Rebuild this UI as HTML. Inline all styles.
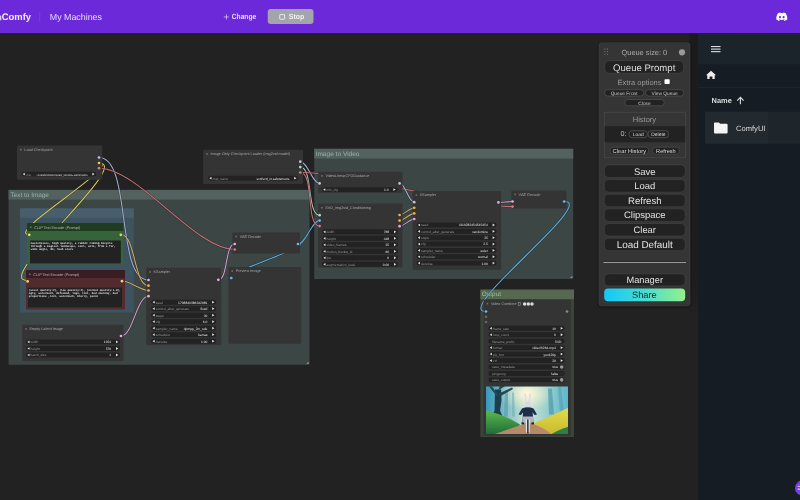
<!DOCTYPE html><html><head><meta charset="utf-8"><style>html,body{margin:0;padding:0;width:800px;height:500px;overflow:hidden;background:#222}svg{display:block;will-change:transform}text{font-family:"Liberation Sans",sans-serif;text-rendering:geometricPrecision}</style></head><body><svg width="800" height="500" viewBox="0 0 800 500"><rect x="0.00" y="0.00" width="800.00" height="500.00" fill="#222" />
<rect x="8.60" y="189.90" width="300.90" height="174.90" fill="#3c4644" />
<rect x="8.60" y="189.90" width="300.90" height="9.70" fill="#54625f" />
<text x="10.60" y="197.10" font-size="6.38" fill="#98b2aa" >Text to Image</text>
<path d="M308.6 361.5 L308.6 363.9 L306.2 363.9 Z" fill="#8a9490"/>
<rect x="314.20" y="148.80" width="259.00" height="130.20" fill="#3c4644" />
<rect x="314.20" y="148.80" width="259.00" height="9.80" fill="#54625f" />
<text x="315.60" y="156.30" font-size="6.56" fill="#98b2aa" >Image to Video</text>
<path d="M572.3 275.7 L572.3 278.1 L569.9 278.1 Z" fill="#8a9490"/>
<rect x="480.40" y="289.60" width="93.60" height="147.40" fill="#3c4439" />
<rect x="480.40" y="289.60" width="93.60" height="9.60" fill="#566850" />
<text x="481.80" y="296.20" font-size="6.40" fill="#98c090" >Output</text>
<rect x="20.00" y="208.40" width="113.80" height="104.20" fill="#3d5360" />
<rect x="20.00" y="208.40" width="113.80" height="9.40" fill="#475f6d" />
<path d="M99 157.5 C132.03 157.5 115.47 280 148.5 280" stroke="#000" stroke-opacity="0.3" stroke-width="2.1" fill="none"/><path d="M99 157.5 C132.03 157.5 115.47 280 148.5 280" stroke="#a8abcb" stroke-width="1.1" fill="none"/><path d="M99 163 C124.02 163 3.98 234.5 29 234.5" stroke="#000" stroke-opacity="0.3" stroke-width="2.1" fill="none"/><path d="M99 163 C124.02 163 3.98 234.5 29 234.5" stroke="#d4c458" stroke-width="1.1" fill="none"/><path d="M99 163 C133.45 163 -7.45 280.5 27 280.5" stroke="#000" stroke-opacity="0.3" stroke-width="2.1" fill="none"/><path d="M99 163 C133.45 163 -7.45 280.5 27 280.5" stroke="#d4c458" stroke-width="1.1" fill="none"/><path d="M99 168.2 C138.55 168.2 195.15 249.5 234.7 249.5" stroke="#000" stroke-opacity="0.3" stroke-width="2.1" fill="none"/><path d="M99 168.2 C138.55 168.2 195.15 249.5 234.7 249.5" stroke="#cc6e78" stroke-width="1.1" fill="none"/><path d="M121 234.5 C135.53 234.5 133.97 285.7 148.5 285.7" stroke="#000" stroke-opacity="0.3" stroke-width="2.1" fill="none"/><path d="M121 234.5 C135.53 234.5 133.97 285.7 148.5 285.7" stroke="#ccaa66" stroke-width="1.1" fill="none"/><path d="M122 280.8 C129.05 280.8 141.45 290.5 148.5 290.5" stroke="#000" stroke-opacity="0.3" stroke-width="2.1" fill="none"/><path d="M122 280.8 C129.05 280.8 141.45 290.5 148.5 290.5" stroke="#ccaa66" stroke-width="1.1" fill="none"/><path d="M121 336 C133.09 336 136.41 296.2 148.5 296.2" stroke="#000" stroke-opacity="0.3" stroke-width="2.1" fill="none"/><path d="M121 336 C133.09 336 136.41 296.2 148.5 296.2" stroke="#d09cce" stroke-width="1.1" fill="none"/><path d="M218.3 279.8 C228.14 279.8 224.86 244 234.7 244" stroke="#000" stroke-opacity="0.3" stroke-width="2.1" fill="none"/><path d="M218.3 279.8 C228.14 279.8 224.86 244 234.7 244" stroke="#d09cce" stroke-width="1.1" fill="none"/><path d="M298 244 C316.72 244 212.58 278 231.3 278" stroke="#000" stroke-opacity="0.3" stroke-width="2.1" fill="none"/><path d="M298 244 C316.72 244 212.58 278 231.3 278" stroke="#5aaadc" stroke-width="1.1" fill="none"/><path d="M298 244 C305.96 244 311.64 220.6 319.6 220.6" stroke="#000" stroke-opacity="0.3" stroke-width="2.1" fill="none"/><path d="M298 244 C305.96 244 311.64 220.6 319.6 220.6" stroke="#5aaadc" stroke-width="1.1" fill="none"/><path d="M300.3 161.7 C307.56 161.7 312.34 183.4 319.6 183.4" stroke="#000" stroke-opacity="0.3" stroke-width="2.1" fill="none"/><path d="M300.3 161.7 C307.56 161.7 312.34 183.4 319.6 183.4" stroke="#a8abcb" stroke-width="1.1" fill="none"/><path d="M300.3 167.1 C313.26 167.1 306.64 215.2 319.6 215.2" stroke="#000" stroke-opacity="0.3" stroke-width="2.1" fill="none"/><path d="M300.3 167.1 C313.26 167.1 306.64 215.2 319.6 215.2" stroke="#9ccbbb" stroke-width="1.1" fill="none"/><path d="M300.3 172.5 C314.54 172.5 305.36 226.1 319.6 226.1" stroke="#000" stroke-opacity="0.3" stroke-width="2.1" fill="none"/><path d="M300.3 172.5 C314.54 172.5 305.36 226.1 319.6 226.1" stroke="#cc6e78" stroke-width="1.1" fill="none"/><path d="M300.3 172.5 C354.03 172.5 458.77 206.6 512.5 206.6" stroke="#000" stroke-opacity="0.3" stroke-width="2.1" fill="none"/><path d="M300.3 172.5 C354.03 172.5 458.77 206.6 512.5 206.6" stroke="#cc6e78" stroke-width="1.1" fill="none"/><path d="M399.6 183.4 C405.55 183.4 408.25 202.2 414.2 202.2" stroke="#000" stroke-opacity="0.3" stroke-width="2.1" fill="none"/><path d="M399.6 183.4 C405.55 183.4 408.25 202.2 414.2 202.2" stroke="#a8abcb" stroke-width="1.1" fill="none"/><path d="M399.6 215 C403.67 215 410.13 207.8 414.2 207.8" stroke="#000" stroke-opacity="0.3" stroke-width="2.1" fill="none"/><path d="M399.6 215 C403.67 215 410.13 207.8 414.2 207.8" stroke="#ccaa66" stroke-width="1.1" fill="none"/><path d="M399.6 220.6 C403.67 220.6 410.13 213.4 414.2 213.4" stroke="#000" stroke-opacity="0.3" stroke-width="2.1" fill="none"/><path d="M399.6 220.6 C403.67 220.6 410.13 213.4 414.2 213.4" stroke="#ccaa66" stroke-width="1.1" fill="none"/><path d="M399.6 226.2 C403.67 226.2 410.13 219 414.2 219" stroke="#000" stroke-opacity="0.3" stroke-width="2.1" fill="none"/><path d="M399.6 226.2 C403.67 226.2 410.13 219 414.2 219" stroke="#d09cce" stroke-width="1.1" fill="none"/><path d="M498.4 202.4 C501.93 202.4 508.97 201.5 512.5 201.5" stroke="#000" stroke-opacity="0.3" stroke-width="2.1" fill="none"/><path d="M498.4 202.4 C501.93 202.4 508.97 201.5 512.5 201.5" stroke="#d09cce" stroke-width="1.1" fill="none"/><path d="M564.2 201.5 C597.94 201.5 452.26 311.5 486 311.5" stroke="#000" stroke-opacity="0.3" stroke-width="2.1" fill="none"/><path d="M564.2 201.5 C597.94 201.5 452.26 311.5 486 311.5" stroke="#5aaadc" stroke-width="1.1" fill="none"/>
<rect x="17.00" y="145.60" width="85.30" height="34.20" fill="#353434" rx="1.2" />
<rect x="20.00" y="148.90" width="1.60" height="1.60" fill="#6e6e6e" />
<text x="24.30" y="151.05" font-size="3.78" fill="#a6a6a6" >Load Checkpoint</text>
<rect x="21.30" y="171.65" width="75.00" height="4.90" fill="#222" rx="2.45" />
<path d="M22.60 174.10 L24.80 172.75 L24.80 175.45 Z" fill="#e0e0e0"/>
<path d="M94.60 174.10 L92.30 172.70 L92.30 175.50 Z" fill="#e0e0e0"/>
<text x="25.90" y="175.50" font-size="2.84" fill="#959595" >ckpt</text>
<text x="87.50" y="175.50" font-size="2.68" fill="#e2e2e2" text-anchor="end" >realisticVisionV60B1_v51VAE.safetensors</text>
<text x="33.60" y="175.50" font-size="2.37" fill="#777" >…na</text>
<circle cx="99.00" cy="157.50" r="1.35" fill="#c4c4e4" />
<circle cx="99.00" cy="163.00" r="1.35" fill="#e0d050" />
<circle cx="99.00" cy="168.20" r="1.35" fill="#e07880" />
<rect x="203.10" y="149.80" width="99.90" height="34.20" fill="#353434" rx="1.2" />
<rect x="206.10" y="153.10" width="1.60" height="1.60" fill="#6e6e6e" />
<text x="210.40" y="155.25" font-size="3.77" fill="#a6a6a6" >Image Only Checkpoint Loader (img2vid model)</text>
<rect x="208.00" y="175.75" width="90.20" height="4.90" fill="#222" rx="2.45" />
<path d="M209.30 178.20 L211.50 176.85 L211.50 179.55 Z" fill="#e0e0e0"/>
<path d="M296.50 178.20 L294.20 176.80 L294.20 179.60 Z" fill="#e0e0e0"/>
<text x="212.60" y="179.60" font-size="3.15" fill="#959595" >ckpt_name</text>
<text x="289.40" y="179.60" font-size="3.24" fill="#e2e2e2" text-anchor="end" >svd/svd_xt.safetensors</text>
<circle cx="300.30" cy="161.70" r="1.35" fill="#c4c4e4" />
<circle cx="300.30" cy="167.10" r="1.35" fill="#a8e0c8" />
<circle cx="300.30" cy="172.50" r="1.35" fill="#e07880" />
<rect x="27.00" y="223.00" width="96.40" height="41.60" fill="#37633a" rx="1.2" />
<path d="M27 230.9 V224.2 Q27 223 28.2 223 H122.2 Q123.4 223 123.4 224.2 V230.9 Z" fill="#1f3c21"/>
<rect x="30.00" y="226.45" width="1.60" height="1.60" fill="#6e6e6e" />
<text x="34.30" y="228.60" font-size="3.79" fill="#b4bcb4" >CLIP Text Encode (Prompt)</text>
<rect x="30.00" y="240.50" width="90.80" height="22.90" fill="#222" />
<text x="30.80" y="244.10" font-size="2.73" fill="#e6e6e6" font-weight="bold" style="font-family:'Liberation Mono',monospace" >masterpiece, high quality, a rabbit riding bicycle</text>
<text x="30.80" y="247.25" font-size="2.73" fill="#e6e6e6" font-weight="bold" style="font-family:'Liberation Mono',monospace" >through a magical landscape, cool, solo, from a far,</text>
<text x="30.80" y="250.40" font-size="2.73" fill="#e6e6e6" font-weight="bold" style="font-family:'Liberation Mono',monospace" >wide angle, 8k, lush stars</text>
<circle cx="29.20" cy="234.80" r="1.35" fill="#f0d868" />
<circle cx="120.80" cy="234.80" r="1.35" fill="#f0d070" />
<rect x="26.00" y="270.00" width="99.00" height="39.50" fill="#522b2f" rx="1.2" />
<path d="M26 278 V271.2 Q26 270 27.2 270 H123.8 Q125 270 125 271.2 V278 Z" fill="#381e22"/>
<rect x="29.00" y="273.50" width="1.60" height="1.60" fill="#6e6e6e" />
<text x="33.30" y="275.65" font-size="3.79" fill="#bcb4b4" >CLIP Text Encode (Prompt)</text>
<rect x="28.00" y="287.60" width="94.00" height="19.60" fill="#222" />
<text x="28.80" y="290.80" font-size="2.70" fill="#e6e6e6" font-weight="bold" style="font-family:'Liberation Mono',monospace" >(worst quality:2), (low quality:2), (normal quality:1.8),</text>
<text x="28.80" y="294.00" font-size="2.70" fill="#e6e6e6" font-weight="bold" style="font-family:'Liberation Mono',monospace" >ugly, watermark, deformed, logo, text, bad anatomy, bad</text>
<text x="28.80" y="297.20" font-size="2.70" fill="#e6e6e6" font-weight="bold" style="font-family:'Liberation Mono',monospace" >proportions ,text, watermark, blurry, paint</text>
<circle cx="27.60" cy="281.40" r="1.35" fill="#f0d868" />
<circle cx="122.00" cy="281.20" r="1.35" fill="#f0d070" />
<rect x="22.20" y="324.80" width="101.30" height="36.20" fill="#353434" rx="1.2" />
<rect x="25.20" y="328.10" width="1.60" height="1.60" fill="#6e6e6e" />
<text x="29.50" y="330.25" font-size="3.77" fill="#a6a6a6" >Empty Latent Image</text>
<rect x="26.00" y="339.45" width="94.00" height="4.90" fill="#222" rx="2.45" />
<path d="M27.30 341.90 L29.50 340.55 L29.50 343.25 Z" fill="#e0e0e0"/>
<path d="M118.30 341.90 L116.00 340.50 L116.00 343.30 Z" fill="#e0e0e0"/>
<text x="30.60" y="343.30" font-size="3.30" fill="#959595" >width</text>
<text x="111.20" y="343.30" font-size="3.30" fill="#e2e2e2" text-anchor="end" >1024</text>
<rect x="26.00" y="346.05" width="94.00" height="4.90" fill="#222" rx="2.45" />
<path d="M27.30 348.50 L29.50 347.15 L29.50 349.85 Z" fill="#e0e0e0"/>
<path d="M118.30 348.50 L116.00 347.10 L116.00 349.90 Z" fill="#e0e0e0"/>
<text x="30.60" y="349.90" font-size="3.30" fill="#959595" >height</text>
<text x="111.20" y="349.90" font-size="3.30" fill="#e2e2e2" text-anchor="end" >576</text>
<rect x="26.00" y="352.55" width="94.00" height="4.90" fill="#222" rx="2.45" />
<path d="M27.30 355.00 L29.50 353.65 L29.50 356.35 Z" fill="#e0e0e0"/>
<path d="M118.30 355.00 L116.00 353.60 L116.00 356.40 Z" fill="#e0e0e0"/>
<text x="30.60" y="356.40" font-size="3.30" fill="#959595" >batch_size</text>
<text x="111.20" y="356.40" font-size="3.30" fill="#e2e2e2" text-anchor="end" >1</text>
<circle cx="121.00" cy="336.00" r="1.35" fill="#e8a8e0" />
<rect x="146.30" y="267.80" width="74.90" height="77.50" fill="#353434" rx="1.2" />
<rect x="149.30" y="271.10" width="1.60" height="1.60" fill="#6e6e6e" />
<text x="153.60" y="273.25" font-size="3.78" fill="#a6a6a6" >KSampler</text>
<rect x="151.20" y="299.75" width="65.00" height="4.90" fill="#222" rx="2.45" />
<path d="M152.50 302.20 L154.70 300.85 L154.70 303.55 Z" fill="#e0e0e0"/>
<path d="M214.50 302.20 L212.20 300.80 L212.20 303.60 Z" fill="#e0e0e0"/>
<text x="155.80" y="303.60" font-size="3.30" fill="#959595" >seed</text>
<text x="207.40" y="303.60" font-size="3.30" fill="#e2e2e2" text-anchor="end" >1708840386292081</text>
<rect x="151.20" y="306.25" width="65.00" height="4.90" fill="#222" rx="2.45" />
<path d="M152.50 308.70 L154.70 307.35 L154.70 310.05 Z" fill="#e0e0e0"/>
<path d="M214.50 308.70 L212.20 307.30 L212.20 310.10 Z" fill="#e0e0e0"/>
<text x="155.80" y="310.10" font-size="3.30" fill="#959595" >control_after_generate</text>
<text x="207.40" y="310.10" font-size="3.30" fill="#e2e2e2" text-anchor="end" >fixed</text>
<rect x="151.20" y="312.75" width="65.00" height="4.90" fill="#222" rx="2.45" />
<path d="M152.50 315.20 L154.70 313.85 L154.70 316.55 Z" fill="#e0e0e0"/>
<path d="M214.50 315.20 L212.20 313.80 L212.20 316.60 Z" fill="#e0e0e0"/>
<text x="155.80" y="316.60" font-size="3.30" fill="#959595" >steps</text>
<text x="207.40" y="316.60" font-size="3.30" fill="#e2e2e2" text-anchor="end" >30</text>
<rect x="151.20" y="319.25" width="65.00" height="4.90" fill="#222" rx="2.45" />
<path d="M152.50 321.70 L154.70 320.35 L154.70 323.05 Z" fill="#e0e0e0"/>
<path d="M214.50 321.70 L212.20 320.30 L212.20 323.10 Z" fill="#e0e0e0"/>
<text x="155.80" y="323.10" font-size="3.30" fill="#959595" >cfg</text>
<text x="207.40" y="323.10" font-size="3.30" fill="#e2e2e2" text-anchor="end" >6.0</text>
<rect x="151.20" y="325.75" width="65.00" height="4.90" fill="#222" rx="2.45" />
<path d="M152.50 328.20 L154.70 326.85 L154.70 329.55 Z" fill="#e0e0e0"/>
<path d="M214.50 328.20 L212.20 326.80 L212.20 329.60 Z" fill="#e0e0e0"/>
<text x="155.80" y="329.60" font-size="3.30" fill="#959595" >sampler_name</text>
<text x="207.40" y="329.60" font-size="3.30" fill="#e2e2e2" text-anchor="end" >dpmpp_2m_sde</text>
<rect x="151.20" y="332.25" width="65.00" height="4.90" fill="#222" rx="2.45" />
<path d="M152.50 334.70 L154.70 333.35 L154.70 336.05 Z" fill="#e0e0e0"/>
<path d="M214.50 334.70 L212.20 333.30 L212.20 336.10 Z" fill="#e0e0e0"/>
<text x="155.80" y="336.10" font-size="3.30" fill="#959595" >scheduler</text>
<text x="207.40" y="336.10" font-size="3.30" fill="#e2e2e2" text-anchor="end" >karras</text>
<rect x="151.20" y="338.75" width="65.00" height="4.90" fill="#222" rx="2.45" />
<path d="M152.50 341.20 L154.70 339.85 L154.70 342.55 Z" fill="#e0e0e0"/>
<path d="M214.50 341.20 L212.20 339.80 L212.20 342.60 Z" fill="#e0e0e0"/>
<text x="155.80" y="342.60" font-size="3.30" fill="#959595" >denoise</text>
<text x="207.40" y="342.60" font-size="3.30" fill="#e2e2e2" text-anchor="end" >1.00</text>
<circle cx="148.50" cy="280.00" r="1.35" fill="#c4c4e4" />
<circle cx="148.50" cy="285.70" r="1.35" fill="#f0b050" />
<circle cx="148.50" cy="290.50" r="1.35" fill="#f0b050" />
<circle cx="148.50" cy="296.20" r="1.35" fill="#e8a8e0" />
<circle cx="218.30" cy="279.80" r="1.35" fill="#e8a8e0" />
<rect x="232.40" y="232.40" width="67.60" height="21.00" fill="#353434" rx="1.2" />
<rect x="235.40" y="235.70" width="1.60" height="1.60" fill="#6e6e6e" />
<text x="239.70" y="237.85" font-size="3.84" fill="#a6a6a6" >VAE Decode</text>
<circle cx="234.75" cy="244.00" r="1.35" fill="#e8b0e0" />
<circle cx="234.75" cy="249.50" r="1.35" fill="#e07880" />
<circle cx="298.00" cy="244.00" r="1.35" fill="#70b8f0" />
<rect x="228.40" y="267.00" width="72.80" height="76.80" fill="#353434" rx="1.2" />
<rect x="231.40" y="270.30" width="1.60" height="1.60" fill="#6e6e6e" />
<text x="235.70" y="272.45" font-size="3.81" fill="#a6a6a6" >Preview Image</text>
<circle cx="231.30" cy="278.00" r="1.35" fill="#70b8f0" />
<rect x="318.20" y="171.80" width="84.30" height="21.00" fill="#353434" rx="1.2" />
<rect x="321.20" y="175.10" width="1.60" height="1.60" fill="#6e6e6e" />
<text x="325.50" y="177.25" font-size="3.76" fill="#a6a6a6" >VideoLinearCFGGuidance</text>
<rect x="321.80" y="187.15" width="75.60" height="4.90" fill="#222" rx="2.45" />
<path d="M323.10 189.60 L325.30 188.25 L325.30 190.95 Z" fill="#e0e0e0"/>
<path d="M395.70 189.60 L393.40 188.20 L393.40 191.00 Z" fill="#e0e0e0"/>
<text x="326.40" y="191.00" font-size="3.30" fill="#959595" >min_cfg</text>
<text x="388.60" y="191.00" font-size="3.30" fill="#e2e2e2" text-anchor="end" >1.0</text>
<circle cx="319.60" cy="183.40" r="1.35" fill="#c4c4e4" />
<circle cx="399.60" cy="183.40" r="1.35" fill="#c4c4e4" />
<rect x="318.00" y="203.60" width="84.50" height="63.80" fill="#353434" rx="1.2" />
<rect x="321.00" y="206.90" width="1.60" height="1.60" fill="#6e6e6e" />
<text x="325.30" y="209.05" font-size="3.75" fill="#a6a6a6" >SVD_img2vid_Conditioning</text>
<rect x="322.00" y="229.35" width="76.00" height="4.90" fill="#222" rx="2.45" />
<path d="M323.30 231.80 L325.50 230.45 L325.50 233.15 Z" fill="#e0e0e0"/>
<path d="M396.30 231.80 L394.00 230.40 L394.00 233.20 Z" fill="#e0e0e0"/>
<text x="326.60" y="233.20" font-size="3.30" fill="#959595" >width</text>
<text x="389.20" y="233.20" font-size="3.30" fill="#e2e2e2" text-anchor="end" >768</text>
<rect x="322.00" y="235.85" width="76.00" height="4.90" fill="#222" rx="2.45" />
<path d="M323.30 238.30 L325.50 236.95 L325.50 239.65 Z" fill="#e0e0e0"/>
<path d="M396.30 238.30 L394.00 236.90 L394.00 239.70 Z" fill="#e0e0e0"/>
<text x="326.60" y="239.70" font-size="3.30" fill="#959595" >height</text>
<text x="389.20" y="239.70" font-size="3.30" fill="#e2e2e2" text-anchor="end" >448</text>
<rect x="322.00" y="242.35" width="76.00" height="4.90" fill="#222" rx="2.45" />
<path d="M323.30 244.80 L325.50 243.45 L325.50 246.15 Z" fill="#e0e0e0"/>
<path d="M396.30 244.80 L394.00 243.40 L394.00 246.20 Z" fill="#e0e0e0"/>
<text x="326.60" y="246.20" font-size="3.30" fill="#959595" >video_frames</text>
<text x="389.20" y="246.20" font-size="3.30" fill="#e2e2e2" text-anchor="end" >25</text>
<rect x="322.00" y="248.85" width="76.00" height="4.90" fill="#222" rx="2.45" />
<path d="M323.30 251.30 L325.50 249.95 L325.50 252.65 Z" fill="#e0e0e0"/>
<path d="M396.30 251.30 L394.00 249.90 L394.00 252.70 Z" fill="#e0e0e0"/>
<text x="326.60" y="252.70" font-size="3.30" fill="#959595" >motion_bucket_id</text>
<text x="389.20" y="252.70" font-size="3.30" fill="#e2e2e2" text-anchor="end" >60</text>
<rect x="322.00" y="255.35" width="76.00" height="4.90" fill="#222" rx="2.45" />
<path d="M323.30 257.80 L325.50 256.45 L325.50 259.15 Z" fill="#e0e0e0"/>
<path d="M396.30 257.80 L394.00 256.40 L394.00 259.20 Z" fill="#e0e0e0"/>
<text x="326.60" y="259.20" font-size="3.30" fill="#959595" >fps</text>
<text x="389.20" y="259.20" font-size="3.30" fill="#e2e2e2" text-anchor="end" >6</text>
<rect x="322.00" y="261.85" width="76.00" height="4.90" fill="#222" rx="2.45" />
<path d="M323.30 264.30 L325.50 262.95 L325.50 265.65 Z" fill="#e0e0e0"/>
<path d="M396.30 264.30 L394.00 262.90 L394.00 265.70 Z" fill="#e0e0e0"/>
<text x="326.60" y="265.70" font-size="3.30" fill="#959595" >augmentation_level</text>
<text x="389.20" y="265.70" font-size="3.30" fill="#e2e2e2" text-anchor="end" >0.00</text>
<circle cx="319.60" cy="215.20" r="1.35" fill="#a8e0c8" />
<circle cx="319.60" cy="220.60" r="1.35" fill="#70b8f0" />
<circle cx="319.60" cy="226.10" r="1.35" fill="#e07880" />
<circle cx="399.60" cy="215.00" r="1.35" fill="#f0b050" />
<circle cx="399.60" cy="220.60" r="1.35" fill="#f0b050" />
<circle cx="399.60" cy="226.20" r="1.35" fill="#e8a8e0" />
<rect x="412.60" y="191.00" width="88.50" height="78.70" fill="#353434" rx="1.2" />
<rect x="415.60" y="194.30" width="1.60" height="1.60" fill="#6e6e6e" />
<text x="419.90" y="196.45" font-size="3.69" fill="#a6a6a6" >KSampler</text>
<rect x="416.50" y="222.55" width="80.10" height="4.90" fill="#222" rx="2.45" />
<path d="M417.80 225.00 L420.00 223.65 L420.00 226.35 Z" fill="#e0e0e0"/>
<path d="M494.90 225.00 L492.60 223.60 L492.60 226.40 Z" fill="#e0e0e0"/>
<text x="421.10" y="226.40" font-size="3.30" fill="#959595" >seed</text>
<text x="487.80" y="226.40" font-size="3.30" fill="#e2e2e2" text-anchor="end" >1110282454545454</text>
<rect x="416.50" y="228.90" width="80.10" height="4.90" fill="#222" rx="2.45" />
<path d="M417.80 231.35 L420.00 230.00 L420.00 232.70 Z" fill="#e0e0e0"/>
<path d="M494.90 231.35 L492.60 229.95 L492.60 232.75 Z" fill="#e0e0e0"/>
<text x="421.10" y="232.75" font-size="3.30" fill="#959595" >control_after_generate</text>
<text x="487.80" y="232.75" font-size="3.30" fill="#e2e2e2" text-anchor="end" >randomize</text>
<rect x="416.50" y="235.25" width="80.10" height="4.90" fill="#222" rx="2.45" />
<path d="M417.80 237.70 L420.00 236.35 L420.00 239.05 Z" fill="#e0e0e0"/>
<path d="M494.90 237.70 L492.60 236.30 L492.60 239.10 Z" fill="#e0e0e0"/>
<text x="421.10" y="239.10" font-size="3.30" fill="#959595" >steps</text>
<text x="487.80" y="239.10" font-size="3.30" fill="#e2e2e2" text-anchor="end" >25</text>
<rect x="416.50" y="241.60" width="80.10" height="4.90" fill="#222" rx="2.45" />
<path d="M417.80 244.05 L420.00 242.70 L420.00 245.40 Z" fill="#e0e0e0"/>
<path d="M494.90 244.05 L492.60 242.65 L492.60 245.45 Z" fill="#e0e0e0"/>
<text x="421.10" y="245.45" font-size="3.30" fill="#959595" >cfg</text>
<text x="487.80" y="245.45" font-size="3.30" fill="#e2e2e2" text-anchor="end" >2.5</text>
<rect x="416.50" y="247.95" width="80.10" height="4.90" fill="#222" rx="2.45" />
<path d="M417.80 250.40 L420.00 249.05 L420.00 251.75 Z" fill="#e0e0e0"/>
<path d="M494.90 250.40 L492.60 249.00 L492.60 251.80 Z" fill="#e0e0e0"/>
<text x="421.10" y="251.80" font-size="3.30" fill="#959595" >sampler_name</text>
<text x="487.80" y="251.80" font-size="3.30" fill="#e2e2e2" text-anchor="end" >euler</text>
<rect x="416.50" y="254.30" width="80.10" height="4.90" fill="#222" rx="2.45" />
<path d="M417.80 256.75 L420.00 255.40 L420.00 258.10 Z" fill="#e0e0e0"/>
<path d="M494.90 256.75 L492.60 255.35 L492.60 258.15 Z" fill="#e0e0e0"/>
<text x="421.10" y="258.15" font-size="3.30" fill="#959595" >scheduler</text>
<text x="487.80" y="258.15" font-size="3.30" fill="#e2e2e2" text-anchor="end" >normal</text>
<rect x="416.50" y="260.65" width="80.10" height="4.90" fill="#222" rx="2.45" />
<path d="M417.80 263.10 L420.00 261.75 L420.00 264.45 Z" fill="#e0e0e0"/>
<path d="M494.90 263.10 L492.60 261.70 L492.60 264.50 Z" fill="#e0e0e0"/>
<text x="421.10" y="264.50" font-size="3.30" fill="#959595" >denoise</text>
<text x="487.80" y="264.50" font-size="3.30" fill="#e2e2e2" text-anchor="end" >1.00</text>
<circle cx="414.20" cy="202.20" r="1.35" fill="#c4c4e4" />
<circle cx="414.20" cy="207.80" r="1.35" fill="#f0b050" />
<circle cx="414.20" cy="213.40" r="1.35" fill="#f0b050" />
<circle cx="414.20" cy="219.00" r="1.35" fill="#e8a8e0" />
<circle cx="498.40" cy="202.40" r="1.35" fill="#e8a8e0" />
<rect x="511.30" y="190.50" width="55.20" height="18.10" fill="#353434" rx="1.2" />
<rect x="514.30" y="193.60" width="1.60" height="1.60" fill="#6e6e6e" />
<text x="518.60" y="195.75" font-size="3.89" fill="#a6a6a6" >VAE Decode</text>
<circle cx="512.50" cy="201.50" r="1.35" fill="#e8b0e0" />
<circle cx="512.50" cy="206.60" r="1.35" fill="#e07880" />
<circle cx="564.20" cy="201.50" r="1.35" fill="#70b8f0" />
<rect x="483.60" y="299.50" width="87.20" height="136.00" fill="#353434" rx="1.2" />
<rect x="486.60" y="302.80" width="1.60" height="1.60" fill="#6e6e6e" />
<text x="490.90" y="304.95" font-size="3.75" fill="#a6a6a6" >Video Combine</text>
<rect x="518.20" y="302.60" width="2.00" height="2.80" fill="none" stroke="#aaa" stroke-width="0.5"/>
<circle cx="524.60" cy="304.00" r="1.75" fill="#dcdcdc" />
<circle cx="528.30" cy="304.00" r="1.75" fill="#dcdcdc" />
<circle cx="532.00" cy="304.00" r="1.75" fill="#dcdcdc" />
<circle cx="486.00" cy="311.50" r="1.35" fill="#70b8f0" />
<circle cx="486.00" cy="316.80" r="1.35" fill="#666" />
<circle cx="486.00" cy="322.00" r="1.35" fill="#666" />
<circle cx="567.00" cy="311.50" r="1.35" fill="#888" />
<rect x="488.40" y="325.85" width="76.30" height="4.90" fill="#222" rx="2.45" />
<path d="M489.70 328.30 L491.90 326.95 L491.90 329.65 Z" fill="#e0e0e0"/>
<path d="M563.00 328.30 L560.70 326.90 L560.70 329.70 Z" fill="#e0e0e0"/>
<text x="493.00" y="329.70" font-size="3.30" fill="#959595" >frame_rate</text>
<text x="555.90" y="329.70" font-size="3.30" fill="#e2e2e2" text-anchor="end" >10</text>
<rect x="488.40" y="332.30" width="76.30" height="4.90" fill="#222" rx="2.45" />
<path d="M489.70 334.75 L491.90 333.40 L491.90 336.10 Z" fill="#e0e0e0"/>
<path d="M563.00 334.75 L560.70 333.35 L560.70 336.15 Z" fill="#e0e0e0"/>
<text x="493.00" y="336.15" font-size="3.30" fill="#959595" >loop_count</text>
<text x="555.90" y="336.15" font-size="3.30" fill="#e2e2e2" text-anchor="end" >0</text>
<rect x="488.40" y="338.75" width="76.30" height="4.90" fill="#222" rx="2.45" />
<text x="492.00" y="342.60" font-size="3.30" fill="#959595" >filename_prefix</text>
<text x="561.50" y="342.60" font-size="3.30" fill="#e2e2e2" text-anchor="end" >SVD</text>
<rect x="488.40" y="345.20" width="76.30" height="4.90" fill="#222" rx="2.45" />
<path d="M489.70 347.65 L491.90 346.30 L491.90 349.00 Z" fill="#e0e0e0"/>
<path d="M563.00 347.65 L560.70 346.25 L560.70 349.05 Z" fill="#e0e0e0"/>
<text x="493.00" y="349.05" font-size="3.30" fill="#959595" >format</text>
<text x="555.90" y="349.05" font-size="3.30" fill="#e2e2e2" text-anchor="end" >video/h264-mp4</text>
<rect x="488.40" y="351.65" width="76.30" height="4.90" fill="#222" rx="2.45" />
<path d="M489.70 354.10 L491.90 352.75 L491.90 355.45 Z" fill="#e0e0e0"/>
<path d="M563.00 354.10 L560.70 352.70 L560.70 355.50 Z" fill="#e0e0e0"/>
<text x="493.00" y="355.50" font-size="3.30" fill="#959595" >pix_fmt</text>
<text x="555.90" y="355.50" font-size="3.30" fill="#e2e2e2" text-anchor="end" >yuv420p</text>
<rect x="488.40" y="358.10" width="76.30" height="4.90" fill="#222" rx="2.45" />
<path d="M489.70 360.55 L491.90 359.20 L491.90 361.90 Z" fill="#e0e0e0"/>
<path d="M563.00 360.55 L560.70 359.15 L560.70 361.95 Z" fill="#e0e0e0"/>
<text x="493.00" y="361.95" font-size="3.30" fill="#959595" >crf</text>
<text x="555.90" y="361.95" font-size="3.30" fill="#e2e2e2" text-anchor="end" >20</text>
<rect x="488.40" y="364.55" width="76.30" height="4.90" fill="#222" rx="2.45" />
<circle cx="561.70" cy="367.00" r="1.8" fill="#9a9a9a" />
<text x="492.00" y="368.40" font-size="3.30" fill="#959595" >save_metadata</text>
<text x="558.20" y="368.40" font-size="3.30" fill="#e2e2e2" text-anchor="end" >true</text>
<rect x="488.40" y="371.00" width="76.30" height="4.90" fill="#222" rx="2.45" />
<circle cx="561.70" cy="373.45" r="1.8" fill="#2a2a2a" />
<text x="492.00" y="374.85" font-size="3.30" fill="#959595" >pingpong</text>
<text x="558.20" y="374.85" font-size="3.30" fill="#e2e2e2" text-anchor="end" >false</text>
<rect x="488.40" y="377.45" width="76.30" height="4.90" fill="#222" rx="2.45" />
<circle cx="561.70" cy="379.90" r="1.8" fill="#9a9a9a" />
<text x="492.00" y="381.30" font-size="3.30" fill="#959595" >save_output</text>
<text x="558.20" y="381.30" font-size="3.30" fill="#e2e2e2" text-anchor="end" >true</text>
<defs><linearGradient id="sky" x1="0" y1="0" x2="1" y2="0"><stop offset="0" stop-color="#3296bc"/><stop offset="0.5" stop-color="#cfe6d2"/><stop offset="1" stop-color="#5ab6cc"/></linearGradient>
<radialGradient id="glow" cx="0.5" cy="0.15" r="0.35"><stop offset="0" stop-color="#fff8d8"/><stop offset="1" stop-color="#f0f0d0" stop-opacity="0"/></radialGradient>
<linearGradient id="gl" x1="0" y1="0" x2="0" y2="1"><stop offset="0" stop-color="#5cb84c"/><stop offset="1" stop-color="#1e6a3a"/></linearGradient>
<linearGradient id="gr" x1="0" y1="0" x2="0" y2="1"><stop offset="0" stop-color="#e4dc48"/><stop offset="1" stop-color="#c8b830"/></linearGradient>
<filter id="soft" x="0" y="0" width="100%" height="100%"><feGaussianBlur stdDeviation="0.45"/></filter>
<clipPath id="imgclip"><rect width="82" height="47.6"/></clipPath></defs>
<g transform="translate(486,386.4)" clip-path="url(#imgclip)"><g filter="url(#soft)">
<rect x="-1" y="-1" width="84" height="49.6" fill="url(#sky)"/>
<rect width="82" height="47.6" fill="url(#glow)"/>
<path d="M19 4 L22 4 L22 30 L18 30 Z" fill="#5aa0b0" opacity="0.7"/>
<path d="M26 6 L28 6 L29 30 L26 30 Z" fill="#70b0b8" opacity="0.6"/>
<path d="M62 2 L66 2 L68 28 L63 28 Z" fill="#4a98a8" opacity="0.7"/>
<path d="M72 0 L75 0 L78 26 L74 26 Z" fill="#4a98a8" opacity="0.5"/>
<path d="M9 3 L15 3 L15.5 14 L14 24 L17 31 L5 31 L8.5 24 Z" fill="#1f3f4c"/>
<path d="M3 0 L11 10 L12 8 L6 0 Z M13 7 L26 1 L27 2.5 L14 10 Z M12 4 L20 -1 L14 -1 Z" fill="#244a58"/>
<path d="M-1 24 Q16 27 34 38 L28 48.6 L-1 48.6 Z" fill="url(#gl)"/>
<path d="M83 21 Q64 30 47 37 L54 48.6 L83 48.6 Z" fill="url(#gr)"/>
<path d="M83 40 Q72 43 64 48.6 L83 48.6 Z" fill="#2f8040"/>
<path d="M6 48.6 Q30 40 39 37 L46 37 Q60 42 66 48.6 Z" fill="#b48a6a"/>
<path d="M38.2 7.5 Q39 5.5 40 7.5 L41 16 L39.2 16 Z M43.2 7.5 Q44.2 5.5 45 7.5 L44.2 16 L42.4 16 Z" fill="#e4dce4"/>
<ellipse cx="41.8" cy="18.2" rx="2.8" ry="3" fill="#d4dae4"/>
<path d="M32.5 28 L36 22 Q41.8 19.5 47.5 22 L51 28 L48.5 28.6 L46 25 L37.5 25 L35 28.6 Z" fill="#1c2e4c"/>
<path d="M37 24 L46.5 24 L47.5 37 L36.5 37 Z" fill="#1c2e4c"/>
<path d="M36.5 30 L47.5 30 L47 37 L37 37 Z" fill="#b0b6bc"/>
<path d="M39.8 33 L43.8 33 L43.6 46 L40 46 Z" fill="#e8e8ec"/>
<rect x="41.1" y="33" width="1.5" height="14" fill="#2a2a30"/>
<rect x="35.5" y="36" width="2.5" height="2" fill="#222"/><rect x="45.5" y="36" width="2.5" height="2" fill="#222"/>
</g></g>
<rect x="0.00" y="0.00" width="800.00" height="33.40" fill="#6b29d9" />
<text x="1.80" y="20.30" font-size="9.50" fill="#f4ecff" font-weight="bold" textLength="29.30" lengthAdjust="spacingAndGlyphs" >Comfy</text>
<rect x="0.00" y="15.60" width="1.30" height="4.70" fill="#d8c8f8" />
<rect x="39.40" y="12.00" width="0.80" height="9.80" fill="#7d45dc" />
<text x="49.80" y="19.50" font-size="8.85" fill="#e9ddfc" >My Machines</text>
<rect x="223.80" y="16.60" width="5.00" height="0.70" fill="#e2d4fa" />
<rect x="225.95" y="14.30" width="0.70" height="5.20" fill="#e2d4fa" />
<text x="231.75" y="19.10" font-size="7.50" fill="#e9ddfc" font-weight="bold" textLength="24.45" lengthAdjust="spacingAndGlyphs" >Change</text>
<rect x="267.75" y="9.00" width="45.75" height="15.00" fill="#a2a5ab" rx="3" />
<rect x="279.75" y="14.60" width="4.85" height="4.60" fill="none" rx="0.4" stroke="#f0f0f4" stroke-width="0.9"/>
<text x="288.75" y="19.10" font-size="7.50" fill="#f2f2f6" font-weight="bold" textLength="15.45" lengthAdjust="spacingAndGlyphs" >Stop</text>
<g transform="translate(776.3,12.6) scale(0.0866)"><path fill="#fff" d="M107.7 8.07A105.15 105.15 0 0 0 81.47 0a72.06 72.06 0 0 0-3.36 6.830 97.68 97.68 0 0 0-29.11 0A72.37 72.37 0 0 0 45.640 0a105.89 105.89 0 0 0-26.25 8.09C2.79 32.65-1.71 56.6.54 80.21a105.730 105.73 0 0 0 32.17 16.15 77.700 77.7 0 0 0 6.89-11.11 68.420 68.42 0 0 1-10.85-5.18c.91-.66 1.8-1.34 2.66-2a75.570 75.57 0 0 0 64.32 0c.87.71 1.76 1.390 2.66 2a68.680 68.68 0 0 1-10.87 5.19 77 77 0 0 0 6.89 11.1 105.250 105.25 0 0 0 32.19-16.14c2.64-27.38-4.51-51.11-18.9-72.15ZM42.45 65.69C36.18 65.69 31 60 31 53s5-12.74 11.43-12.74S54 46 53.89 53s-5.050 12.69-11.44 12.69Zm42.240 0C78.41 65.69 73.25 60 73.25 53s5-12.74 11.44-12.74S96.23 46 96.12 53s-5.040 12.69-11.43 12.69Z"/></g>
<linearGradient id="strip" x1="0" y1="0" x2="0" y2="1"><stop offset="0" stop-color="#1b1b1b"/><stop offset="0.85" stop-color="#1d1d1d"/><stop offset="1" stop-color="#222"/></linearGradient>
<rect x="689.50" y="33.20" width="8.50" height="286.80" fill="url(#strip)" />
<rect x="0.00" y="33.20" width="698.00" height="1.40" fill="#1a1a1a" opacity="0.6"/>
<filter id="sh" x="-20%" y="-20%" width="140%" height="140%"><feDropShadow dx="0" dy="1" stdDeviation="1.5" flood-color="#000" flood-opacity="0.6"/></filter>
<rect x="599.00" y="42.80" width="91.00" height="263.00" fill="#353535" rx="2.5" filter="url(#sh)" stroke="#3e3e3e" stroke-width="0.6"/>
<rect x="604.40" y="48.60" width="0.90" height="0.90" fill="#8a8a8a" />
<rect x="604.40" y="51.20" width="0.90" height="0.90" fill="#8a8a8a" />
<rect x="604.40" y="53.80" width="0.90" height="0.90" fill="#8a8a8a" />
<rect x="607.00" y="48.60" width="0.90" height="0.90" fill="#8a8a8a" />
<rect x="607.00" y="51.20" width="0.90" height="0.90" fill="#8a8a8a" />
<rect x="607.00" y="53.80" width="0.90" height="0.90" fill="#8a8a8a" />
<text x="621.50" y="55.10" font-size="7.42" fill="#a8a8a8" >Queue size: 0</text>
<circle cx="682.00" cy="52.30" r="3.1" fill="#9a9a9a" />
<rect x="604.70" y="60.70" width="79.00" height="12.50" fill="#222" rx="4" stroke="#4a4a4a" stroke-width="0.6"/>
<text x="644.20" y="70.50" font-size="9.58" fill="#ddd" text-anchor="middle" >Queue Prompt</text>
<text x="617.60" y="84.50" font-size="7.54" fill="#9a9a9a" >Extra options</text>
<rect x="664.50" y="79.20" width="5.20" height="4.90" fill="#fff" rx="0.8" />
<rect x="604.70" y="89.70" width="38.80" height="6.30" fill="#222" rx="3" stroke="#5a5a5a" stroke-width="0.6"/>
<text x="624.10" y="95.10" font-size="4.81" fill="#c8c8c8" text-anchor="middle" >Queue Front</text>
<rect x="645.60" y="89.70" width="38.10" height="6.30" fill="#222" rx="3" stroke="#5a5a5a" stroke-width="0.6"/>
<text x="664.65" y="95.10" font-size="4.83" fill="#c8c8c8" text-anchor="middle" >View Queue</text>
<rect x="624.90" y="99.50" width="39.20" height="6.30" fill="#222" rx="3" stroke="#5a5a5a" stroke-width="0.6"/>
<text x="644.50" y="104.90" font-size="4.81" fill="#c8c8c8" text-anchor="middle" >Close</text>
<rect x="604.30" y="112.20" width="81.20" height="45.50" fill="none" stroke="#4a4a4a" stroke-width="0.7"/>
<text x="644.40" y="122.30" font-size="7.52" fill="#9a9a9a" text-anchor="middle" >History</text>
<rect x="604.60" y="126.20" width="80.60" height="16.10" fill="#222" />
<text x="620.40" y="136.00" font-size="7.20" fill="#bbb" >0:</text>
<rect x="629.10" y="130.70" width="18.20" height="7.00" fill="#222" rx="3" stroke="#666" stroke-width="0.6"/>
<text x="638.20" y="135.60" font-size="4.86" fill="#ddd" text-anchor="middle" >Load</text>
<rect x="648.10" y="130.70" width="20.60" height="7.00" fill="#222" rx="3" stroke="#666" stroke-width="0.6"/>
<text x="658.40" y="135.60" font-size="4.91" fill="#ddd" text-anchor="middle" >Delete</text>
<rect x="609.90" y="147.20" width="38.80" height="7.00" fill="#222" rx="3" stroke="#555" stroke-width="0.6"/>
<text x="629.30" y="152.50" font-size="5.81" fill="#ddd" text-anchor="middle" >Clear History</text>
<rect x="652.60" y="147.20" width="26.60" height="7.00" fill="#222" rx="3" stroke="#555" stroke-width="0.6"/>
<text x="665.90" y="152.50" font-size="5.60" fill="#ddd" text-anchor="middle" >Refresh</text>
<rect x="604.30" y="164.90" width="80.90" height="12.60" fill="#222" rx="4" stroke="#484848" stroke-width="0.6"/>
<text x="644.75" y="174.50" font-size="9.52" fill="#e2e2e2" text-anchor="middle" >Save</text>
<rect x="604.30" y="179.55" width="80.90" height="12.60" fill="#222" rx="4" stroke="#484848" stroke-width="0.6"/>
<text x="644.75" y="189.15" font-size="9.44" fill="#e2e2e2" text-anchor="middle" >Load</text>
<rect x="604.30" y="194.20" width="80.90" height="12.60" fill="#222" rx="4" stroke="#484848" stroke-width="0.6"/>
<text x="644.75" y="203.80" font-size="9.57" fill="#e2e2e2" text-anchor="middle" >Refresh</text>
<rect x="604.30" y="208.85" width="80.90" height="12.60" fill="#222" rx="4" stroke="#484848" stroke-width="0.6"/>
<text x="644.75" y="218.45" font-size="9.45" fill="#e2e2e2" text-anchor="middle" >Clipspace</text>
<rect x="604.30" y="223.50" width="80.90" height="12.60" fill="#222" rx="4" stroke="#484848" stroke-width="0.6"/>
<text x="644.75" y="233.10" font-size="9.42" fill="#e2e2e2" text-anchor="middle" >Clear</text>
<rect x="604.30" y="238.15" width="80.90" height="12.60" fill="#222" rx="4" stroke="#484848" stroke-width="0.6"/>
<text x="644.75" y="247.75" font-size="9.88" fill="#e2e2e2" text-anchor="middle" >Load Default</text>
<rect x="603.40" y="261.10" width="82.60" height="0.90" fill="#2c2c2c" />
<rect x="603.40" y="262.00" width="82.60" height="1.00" fill="#9a9a9a" />
<rect x="604.30" y="273.80" width="80.90" height="12.10" fill="#222" rx="4" stroke="#484848" stroke-width="0.6"/>
<text x="644.75" y="283.20" font-size="9.25" fill="#e2e2e2" text-anchor="middle" >Manager</text>
<linearGradient id="share" x1="0" y1="0" x2="1" y2="0"><stop offset="0" stop-color="#14c8f8"/><stop offset="0.5" stop-color="#48dcd0"/><stop offset="1" stop-color="#94f08a"/></linearGradient>
<rect x="604.20" y="288.50" width="81.00" height="12.80" fill="url(#share)" rx="4" />
<text x="644.40" y="297.60" font-size="9.29" fill="#0e2c32" text-anchor="middle" >Share</text>
<rect x="698.00" y="33.20" width="102.00" height="466.80" fill="#151c24" />
<rect x="698.00" y="33.20" width="102.00" height="31.20" fill="#1c242b" />
<rect x="698.00" y="87.00" width="102.00" height="0.70" fill="#222a32" />
<rect x="711.00" y="46.00" width="9.50" height="1.10" fill="#dedede" />
<rect x="711.00" y="48.55" width="9.50" height="1.10" fill="#dedede" />
<rect x="711.00" y="51.10" width="9.50" height="1.10" fill="#dedede" />
<path d="M711 70.8 L716 75.2 L714.7 75.2 L714.7 79 L712.4 79 L712.4 76.4 L709.6 76.4 L709.6 79 L707.3 79 L707.3 75.2 L706 75.2 Z" fill="#eee"/>
<text x="711.60" y="102.80" font-size="7.45" fill="#dcdcdc" font-weight="bold" >Name</text>
<path d="M740.4 104.3 V97.6 M737.2 100.6 L740.4 97.3 L743.6 100.6" stroke="#dcdcdc" stroke-width="1.1" fill="none"/>
<rect x="705.20" y="111.70" width="94.80" height="31.90" fill="#1e262c" />
<rect x="705.20" y="111.70" width="62.80" height="31.90" fill="#222a30" />
<path d="M714 123.4 Q714 122.4 715 122.4 L718.8 122.4 L720.2 123.8 L726.6 123.8 Q727.6 123.8 727.6 124.8 L727.6 132.6 Q727.6 133.6 726.6 133.6 L715 133.6 Q714 133.6 714 132.6 Z" fill="#f4f4f4"/>
<text x="736.00" y="131.30" font-size="7.59" fill="#dcdcdc" >ComfyUI</text>
<circle cx="802.50" cy="488.00" r="7.6" fill="#7a3ce6" />
<rect x="797.50" y="485.80" width="2.50" height="1.00" fill="#e0d0ff" rx="0.4" />
<rect x="797.50" y="488.60" width="2.50" height="1.20" fill="#e0d0ff" rx="0.4" /></svg></body></html>
